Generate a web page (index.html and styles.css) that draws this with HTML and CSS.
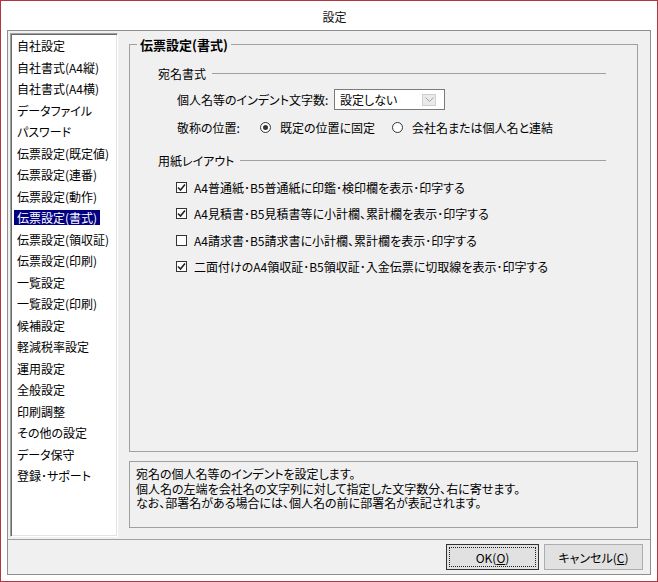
FILE: index.html
```html
<!DOCTYPE html>
<html lang="ja">
<head>
<meta charset="utf-8">
<title>設定</title>
<link rel="stylesheet" href="styles.css">
</head>
<body>
<div class="window">
  <div class="titlebar">設定</div>
  <div class="frame">
    <div class="main">
      <div class="listbox">
        <div class="item"><span>自社設定</span></div>
        <div class="item"><span>自社書式(A4縦)</span></div>
        <div class="item"><span>自社書式(A4横)</span></div>
        <div class="item"><span>データファイル</span></div>
        <div class="item"><span>パスワード</span></div>
        <div class="item"><span>伝票設定(既定値)</span></div>
        <div class="item"><span>伝票設定(連番)</span></div>
        <div class="item"><span>伝票設定(動作)</span></div>
        <div class="item sel"><span>伝票設定(書式)</span></div>
        <div class="item"><span>伝票設定(領収証)</span></div>
        <div class="item"><span>伝票設定(印刷)</span></div>
        <div class="item"><span>一覧設定</span></div>
        <div class="item"><span>一覧設定(印刷)</span></div>
        <div class="item"><span>候補設定</span></div>
        <div class="item"><span>軽減税率設定</span></div>
        <div class="item"><span>運用設定</span></div>
        <div class="item"><span>全般設定</span></div>
        <div class="item"><span>印刷調整</span></div>
        <div class="item"><span>その他の設定</span></div>
        <div class="item"><span>データ保守</span></div>
        <div class="item"><span>登録･サポート</span></div>
      </div>
      <div class="content">
        <fieldset class="group">
          <legend>伝票設定(書式)</legend>
          <div class="sec-head sec1"><span>宛名書式</span><i class="rule"></i></div>
          <div class="field-row r1">
            <span class="label label-indent">個人名等のインデント文字数:</span>
            <div class="select">
              <span class="select-text">設定しない</span>
              <span class="drop"><svg width="9" height="5" viewBox="0 0 9 5"><polyline points="0.5,0.5 4.5,4.5 8.5,0.5" fill="none" stroke="#a0a0a0" stroke-width="1"/></svg></span>
            </div>
          </div>
          <div class="field-row r2">
            <span class="label label-pos">敬称の位置:</span>
            <label class="radio radio1 checked"><span class="dot"><span class="pip"></span></span>既定の位置に固定</label>
            <label class="radio"><span class="dot"></span>会社名または個人名と連結</label>
          </div>
          <div class="sec-head sec2"><span>用紙レイアウト</span><i class="rule"></i></div>
          <div class="checks">
            <div class="check"><span class="box on"><svg width="9" height="9" viewBox="0 0 9 9"><polyline points="1,4.5 3.5,7 8,1.5" fill="none" stroke="#222" stroke-width="1.6"/></svg></span>A4普通紙･B5普通紙に印鑑･検印欄を表示･印字する</div>
            <div class="check"><span class="box on"><svg width="9" height="9" viewBox="0 0 9 9"><polyline points="1,4.5 3.5,7 8,1.5" fill="none" stroke="#222" stroke-width="1.6"/></svg></span>A4見積書･B5見積書等に小計欄、累計欄を表示･印字する</div>
            <div class="check"><span class="box"></span>A4請求書･B5請求書に小計欄、累計欄を表示･印字する</div>
            <div class="check"><span class="box on"><svg width="9" height="9" viewBox="0 0 9 9"><polyline points="1,4.5 3.5,7 8,1.5" fill="none" stroke="#222" stroke-width="1.6"/></svg></span>二面付けのA4領収証･B5領収証･入金伝票に切取線を表示･印字する</div>
          </div>
        </fieldset>
        <div class="desc">
          <div>宛名の個人名等のインデントを設定します。</div>
          <div>個人名の左端を会社名の文字列に対して指定した文字数分、右に寄せます。</div>
          <div>なお、部署名がある場合には、個人名の前に部署名が表記されます。</div>
        </div>
      </div>
    </div>
    <div class="buttons">
      <div class="btn ok"><span class="focus">OK(<u>O</u>)</span></div>
      <div class="btn cancel">キャンセル(<u>C</u>)</div>
    </div>
  </div>
</div>
</body>
</html>
```

FILE: styles.css
```css
* { box-sizing: border-box; }
html, body { margin: 0; padding: 0; }
body {
  width: 658px;
  height: 582px;
  font-family: "Noto Sans CJK JP", "Noto Sans", sans-serif;
  font-size: 12px;
  color: #000;
  background: #fff;
  font-feature-settings: "palt";
}
.window {
  width: 658px;
  height: 582px;
  border: 1px solid #b0373f;
  background: #fff;
  padding: 0 6px 6px;
  display: flex;
  flex-direction: column;
}
.titlebar {
  height: 29px;
  line-height: 31px;
  text-align: center;
  padding-left: 11px;
  font-size: 12px;
  color: #111;
}
.frame {
  height: 545px;
  border: 1px solid #8e8e8e;
  background: #f0f0f0;
  display: flex;
  flex-direction: column;
}
.main {
  height: 508px;
  display: flex;
  padding: 2px 12px 0 2px;
}
.listbox {
  width: 108px;
  height: 504px;
  background: #fff;
  border: 1px solid;
  border-color: #a0a0a0 #fff #fff #a0a0a0;
  box-shadow: inset 1px 1px 0 #696969, inset -1px -1px 0 #e3e3e3;
  padding: 1px;
}
.item {
  height: 21.5px;
  display: flex;
  align-items: center;
  padding-left: 2px;
  white-space: nowrap;
}
.item span {
  line-height: 15px;
  padding: 0 3px;
}
.item.sel span {
  background: #000080;
  color: #fff;
}
.content {
  width: 509px;
  margin-left: 11px;
  padding-top: 3px;
  display: flex;
  flex-direction: column;
}
.group {
  margin: 0;
  padding: 0;
  border: 1px solid #a0a0a0;
  height: 416px;
  min-width: 0;
}
.group legend {
  margin-left: 7px;
  padding: 0 3px;
  font-weight: bold;
  font-size: 13px;
  line-height: 17px;
}
.sec-head {
  display: flex;
  align-items: center;
  height: 16px;
  padding-left: 28px;
  padding-right: 31px;
  white-space: nowrap;
}
.sec-head .rule {
  flex: 1;
  height: 1px;
  background: #a0a0a0;
  margin-left: 6px;
}
.sec1 { margin-top: 12px; }
.sec2 { margin-top: 17px; }
.field-row {
  display: flex;
  align-items: center;
  padding-left: 47px;
  white-space: nowrap;
}
.r1 { height: 21px; margin-top: 8px; }
.r2 { height: 16px; margin-top: 9px; }
.label-indent { width: 157px; }
.label-pos { width: 83px; }
.select {
  width: 111px;
  height: 21px;
  border: 1px solid #7a7a7a;
  background: #fff;
  display: flex;
  align-items: center;
  padding-left: 5px;
}
.drop {
  margin-left: auto;
  margin-right: 8px;
  width: 14px;
  height: 12px;
  border: 1px solid #cfcfcf;
  background: #eaeaea;
  display: flex;
  align-items: center;
  justify-content: center;
}
.radio {
  display: flex;
  align-items: center;
  gap: 9px;
}
.radio1 { width: 132px; }
.dot {
  width: 11px;
  height: 11px;
  border: 1px solid #333;
  border-radius: 50%;
  background: #fff;
  display: flex;
  align-items: center;
  justify-content: center;
}
.pip {
  width: 5px;
  height: 5px;
  border-radius: 50%;
  background: #333;
}
.checks {
  margin-top: 11px;
  padding-left: 46px;
  display: flex;
  flex-direction: column;
  gap: 10.67px;
}
.check {
  height: 16px;
  display: flex;
  align-items: center;
  gap: 7px;
  white-space: nowrap;
}
.box {
  width: 11px;
  height: 11px;
  border: 1px solid #333;
  background: #fff;
  display: flex;
  align-items: center;
  justify-content: center;
}
.desc {
  height: 67px;
  margin-top: 9px;
  border: 1px solid #a0a0a0;
  padding: 5px 6px;
  line-height: 14.5px;
  white-space: nowrap;
}
.buttons {
  height: 35px;
  border-top: 1px solid #a0a0a0;
  display: flex;
  justify-content: flex-end;
  align-items: flex-start;
  padding: 4px 7px 0 0;
  gap: 5px;
}
.btn {
  height: 26px;
  border: 1px solid #adadad;
  background: #e1e1e1;
  display: flex;
  align-items: center;
  justify-content: center;
  white-space: nowrap;
}
.ok {
  width: 93px;
  border-color: #333;
  padding: 2px;
}
.ok .focus {
  width: 100%;
  height: 100%;
  border: 1px dotted #222;
  display: flex;
  align-items: center;
  justify-content: center;
}
.cancel { width: 99px; }
```
